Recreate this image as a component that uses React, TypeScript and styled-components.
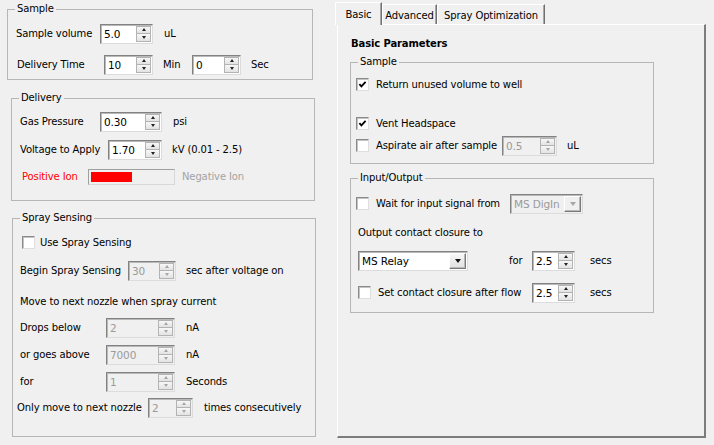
import styled, { createGlobalStyle } from "styled-components";

const Global = createGlobalStyle`
  html, body { margin: 0; padding: 0; background: #f0f0f0; }
  body {
    font-family: "DejaVu Sans", Tahoma, sans-serif;
    font-size: 10px;
    letter-spacing: -0.12px;
    color: #000;
  }
`;

const Page = styled.div`
  width: 714px;
  height: 445px;
  display: flex;
  background: #f0f0f0;
  overflow: hidden;
`;

const LeftColumn = styled.div`
  width: 316px;
  display: flex;
  flex-direction: column;
  padding-top: 2px;
`;

const Group = styled.fieldset<{ $left: number; $width: number; $mt?: number }>`
  margin: ${(p) => p.$mt ?? 0}px 0 0 ${(p) => p.$left}px;
  width: ${(p) => p.$width}px;
  min-width: 0;
  box-sizing: border-box;
  padding: 0;
  border: 1px solid #b6b6b6;
`;

const Legend = styled.legend`
  margin-left: 7px;
  padding: 0 2px;
  line-height: 14px;
`;

const GroupBody = styled.div<{ $pad: string }>`
  display: flex;
  flex-direction: column;
  padding: ${(p) => p.$pad};
`;

const Row = styled.div<{ $mt?: number }>`
  display: flex;
  align-items: center;
  height: 21px;
  margin-top: ${(p) => p.$mt ?? 0}px;
  white-space: nowrap;
`;

const Label = styled.span<{ $w?: number; $ml?: number; $color?: string }>`
  flex: none;
  width: ${(p) => (p.$w ? `${p.$w}px` : "auto")};
  margin-left: ${(p) => p.$ml ?? 0}px;
  color: ${(p) => p.$color ?? "#000"};
  line-height: 14px;
`;

const SpinBox = styled.div<{ $w: number; $disabled?: boolean }>`
  flex: none;
  width: ${(p) => p.$w}px;
  height: 20px;
  box-sizing: border-box;
  display: flex;
  background: ${(p) => (p.$disabled ? "#f0f0f0" : "#fff")};
  border: 1px solid;
  border-color: #828282 #dcdcdc #dcdcdc #828282;
  box-shadow: inset 1px 1px 0 #b9b9b9;
`;

const FieldValue = styled.span<{ $disabled?: boolean }>`
  flex: 1;
  padding: 3px 0 0 3px;
  color: ${(p) => (p.$disabled ? "#9a9a9a" : "#000")};
  font-size: 10.5px;
  overflow: hidden;
`;

const SpinButtons = styled.div`
  width: 15px;
  display: flex;
  flex-direction: column;
  margin: 1px 1px 1px 0;
`;

const SpinButton = styled.div`
  flex: 1;
  display: flex;
  align-items: center;
  justify-content: center;
  background: linear-gradient(#f7f7f7, #e3e3e3);
  border: 1px solid #b3b3b3;
  & + & { border-top: none; }
`;

const Arrow = styled.span<{ $dir: "up" | "down"; $disabled?: boolean }>`
  width: 0;
  height: 0;
  border-left: 2.5px solid transparent;
  border-right: 2.5px solid transparent;
  ${(p) => (p.$dir === "up" ? "border-bottom" : "border-top")}: 3px solid
    ${(p) => (p.$disabled ? "#a6a6a6" : "#222")};
`;

const ComboBox = styled(SpinBox)``;

const ComboButton = styled.div<{ $disabled?: boolean }>`
  width: 15px;
  margin: 1px 1px 1px 0;
  display: flex;
  align-items: center;
  justify-content: center;
  background: ${(p) => (p.$disabled ? "#f0f0f0" : "linear-gradient(#f7f7f7, #e1e1e1)")};
  border: 1px solid;
  border-color: #fff #7a7a7a #7a7a7a #fff;
  box-shadow: inset -1px -1px 0 #b8b8b8;
`;

const DownArrow = styled.span<{ $disabled?: boolean }>`
  width: 0;
  height: 0;
  border-left: 3.5px solid transparent;
  border-right: 3.5px solid transparent;
  border-top: 4px solid ${(p) => (p.$disabled ? "#a6a6a6" : "#111")};
`;

const CheckBox = styled.span<{ $ml?: number }>`
  flex: none;
  width: 13px;
  height: 13px;
  box-sizing: border-box;
  margin-left: ${(p) => p.$ml ?? 0}px;
  display: flex;
  align-items: center;
  justify-content: center;
  background: #fff;
  border: 1px solid;
  border-color: #8a8a8a #dedede #dedede #8a8a8a;
  box-shadow: inset 1px 1px 0 #c4c4c4;
`;

const IonBar = styled.div`
  flex: none;
  width: 87px;
  height: 16px;
  box-sizing: border-box;
  padding: 2px;
  border: 1px solid;
  border-color: #a0a0a0 #d8d8d8 #d8d8d8 #a0a0a0;
  background: #f0f0f0;
`;

const IonFill = styled.div<{ $w: number }>`
  width: ${(p) => p.$w}px;
  height: 100%;
  background: #ff0000;
`;

const RightColumn = styled.div`
  margin-left: 21px;
  padding-top: 2px;
  display: flex;
  flex-direction: column;
`;

const TabStrip = styled.div`
  display: flex;
  align-items: flex-end;
  height: 22px;
  margin-left: -2px;
  position: relative;
  z-index: 1;
`;

const Tab = styled.div<{ $w: number; $active?: boolean }>`
  width: ${(p) => p.$w}px;
  height: ${(p) => (p.$active ? 23 : 20)}px;
  margin-bottom: ${(p) => (p.$active ? -1 : 0)}px;
  box-sizing: border-box;
  display: flex;
  align-items: center;
  justify-content: center;
  padding-top: ${(p) => (p.$active ? 0 : 1)}px;
  background: #f0f0f0;
  border-top: 1px solid #fff;
  border-left: 1px solid #fff;
  border-right: 1px solid #707070;
  box-shadow: inset -1px 0 0 #a8a8a8;
`;

const Panel = styled.div`
  width: 369px;
  height: 414px;
  box-sizing: border-box;
  padding: 12px 0 0 12px;
  background: #f0f0f0;
  border-top: 1px solid #fff;
  border-left: 1px solid #fff;
  border-right: 2px solid #7c7c7c;
  border-bottom: 2px solid #7c7c7c;
`;

const Title = styled.div`
  margin-left: 1px;
  line-height: 14px;
  font-weight: bold;
`;

const Spinner = ({ w, value, disabled }: { w: number; value: string; disabled?: boolean }) => (
  <SpinBox $w={w} $disabled={disabled}>
    <FieldValue $disabled={disabled}>{value}</FieldValue>
    <SpinButtons>
      <SpinButton>
        <Arrow $dir="up" $disabled={disabled} />
      </SpinButton>
      <SpinButton>
        <Arrow $dir="down" $disabled={disabled} />
      </SpinButton>
    </SpinButtons>
  </SpinBox>
);

const Combo = ({ w, value, disabled, ml }: { w: number; value: string; disabled?: boolean; ml?: number }) => (
  <ComboBox $w={w} $disabled={disabled} style={ml ? { marginLeft: ml } : undefined}>
    <FieldValue $disabled={disabled}>{value}</FieldValue>
    <ComboButton $disabled={disabled}>
      <DownArrow $disabled={disabled} />
    </ComboButton>
  </ComboBox>
);

const Check = ({ checked, ml }: { checked?: boolean; ml?: number }) => (
  <CheckBox $ml={ml}>
    {checked && (
      <svg width="9" height="9" viewBox="0 0 9 9">
        <polyline points="1.4,4.2 3.4,6.4 7.6,1.8" fill="none" stroke="#000" strokeWidth="1.8" />
      </svg>
    )}
  </CheckBox>
);

export default function App() {
  return (
    <Page>
      <Global />
      <LeftColumn>
        <Group $left={7} $width={306}>
          <Legend>Sample</Legend>
          <GroupBody $pad="7px 0 4px 8px">
            <Row>
              <Label $w={84}>Sample volume</Label>
              <Spinner w={53} value="5.0" />
              <Label $ml={11}>uL</Label>
            </Row>
            <Row $mt={10}>
              <Label $w={87} $ml={1}>Delivery Time</Label>
              <Spinner w={49} value="10" />
              <Label $ml={10} $w={29}>Min</Label>
              <Spinner w={49} value="0" />
              <Label $ml={10}>Sec</Label>
            </Row>
          </GroupBody>
        </Group>

        <Group $left={11} $width={304} $mt={11}>
          <Legend>Delivery</Legend>
          <GroupBody $pad="6px 0 13px 8px">
            <Row>
              <Label $w={80}>Gas Pressure</Label>
              <Spinner w={62} value="0.30" />
              <Label $ml={11}>psi</Label>
            </Row>
            <Row $mt={7}>
              <Label $w={88}>Voltage to Apply</Label>
              <Spinner w={54} value="1.70" />
              <Label $ml={10}>kV (0.01 - 2.5)</Label>
            </Row>
            <Row $mt={6}>
              <Label $w={66} $ml={2} $color="#ff0000">Positive Ion</Label>
              <IonBar>
                <IonFill $w={41} />
              </IonBar>
              <Label $ml={7} $color="#a3a3a3">Negative Ion</Label>
            </Row>
          </GroupBody>
        </Group>

        <Group $left={12} $width={304} $mt={10}>
          <Legend>Spray Sensing</Legend>
          <GroupBody $pad="7px 0 18px 7px">
            <Row>
              <Check ml={2} />
              <Label $ml={5}>Use Spray Sensing</Label>
            </Row>
            <Row $mt={7}>
              <Label $w={108}>Begin Spray Sensing</Label>
              <Spinner w={48} value="30" disabled />
              <Label $ml={10}>sec after voltage on</Label>
            </Row>
            <Row $mt={10}>
              <Label>Move to next nozzle when spray current</Label>
            </Row>
            <Row $mt={5}>
              <Label $w={86}>Drops below</Label>
              <Spinner w={69} value="2" disabled />
              <Label $ml={11}>nA</Label>
            </Row>
            <Row $mt={6}>
              <Label $w={86}>or goes above</Label>
              <Spinner w={69} value="7000" disabled />
              <Label $ml={11}>nA</Label>
            </Row>
            <Row $mt={6}>
              <Label $w={86}>for</Label>
              <Spinner w={69} value="1" disabled />
              <Label $ml={11}>Seconds</Label>
            </Row>
            <Row $mt={5}>
              <Label $w={131} $ml={-3}>Only move to next nozzle</Label>
              <Spinner w={45} value="2" disabled />
              <Label $ml={11}>times consecutively</Label>
            </Row>
          </GroupBody>
        </Group>
      </LeftColumn>

      <RightColumn>
        <TabStrip>
          <Tab $w={47} $active>Basic</Tab>
          <Tab $w={55}>Advanced</Tab>
          <Tab $w={108}>Spray Optimization</Tab>
        </TabStrip>
        <Panel>
          <Title>Basic Parameters</Title>
          <Group $left={0} $width={304} $mt={4}>
            <Legend>Sample</Legend>
            <GroupBody $pad="5px 0 7px 5px">
              <Row>
                <Check checked />
                <Label $ml={7}>Return unused volume to well</Label>
              </Row>
              <Row $mt={18}>
                <Check checked />
                <Label $ml={7}>Vent Headspace</Label>
              </Row>
              <Row $mt={1}>
                <Check />
                <Label $ml={7} $w={126}>Aspirate air after sample</Label>
                <Spinner w={55} value="0.5" disabled />
                <Label $ml={10}>uL</Label>
              </Row>
            </GroupBody>
          </Group>
          <Group $left={0} $width={304} $mt={7}>
            <Legend>Input/Output</Legend>
            <GroupBody $pad="8px 0 9px 5px">
              <Row>
                <Check />
                <Label $ml={7} $w={134}>Wait for input signal from</Label>
                <Combo w={73} value="MS DigIn" disabled />
              </Row>
              <Row $mt={8}>
                <Label $ml={2}>Output contact closure to</Label>
              </Row>
              <Row $mt={7}>
                <Combo w={110} value="MS Relay" ml={2} />
                <Label $ml={41} $w={23}>for</Label>
                <Spinner w={43} value="2.5" />
                <Label $ml={15}>secs</Label>
              </Row>
              <Row $mt={11}>
                <Check ml={2} />
                <Label $ml={7} $w={154}>Set contact closure after flow</Label>
                <Spinner w={43} value="2.5" />
                <Label $ml={15}>secs</Label>
              </Row>
            </GroupBody>
          </Group>
        </Panel>
      </RightColumn>
    </Page>
  );
}
